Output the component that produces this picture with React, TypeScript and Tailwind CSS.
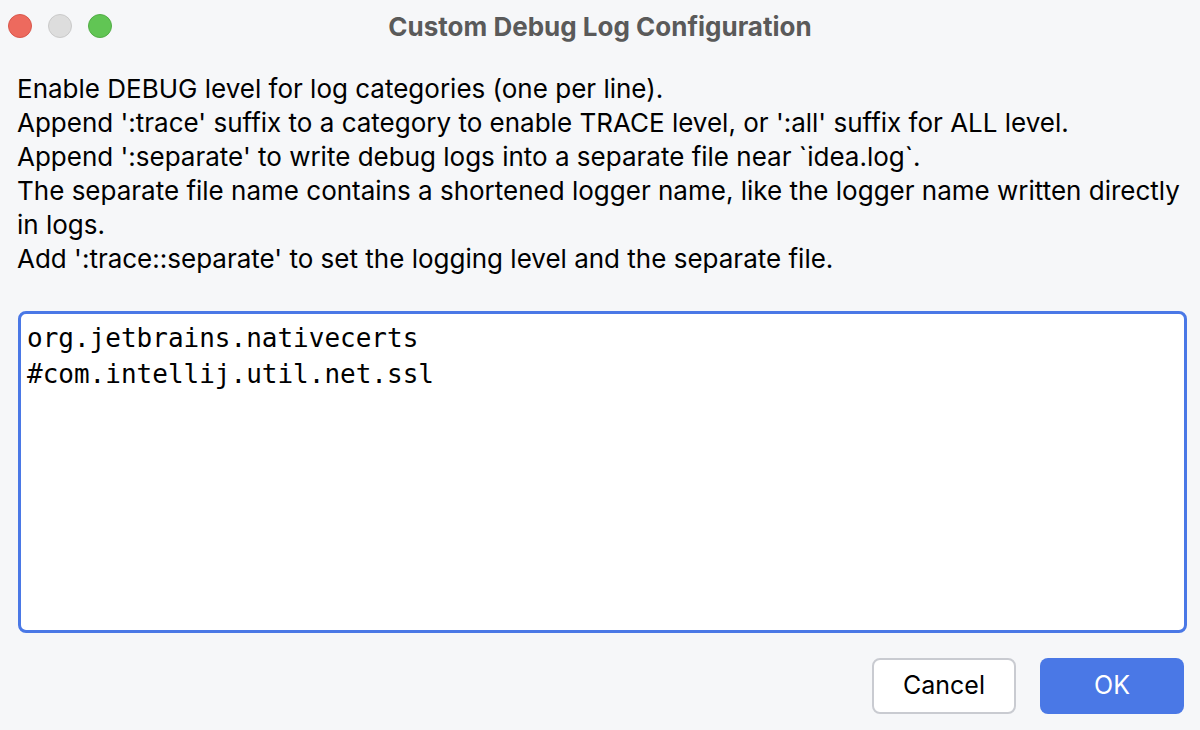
const lines = [
  "Enable DEBUG level for log categories (one per line).",
  "Append ':trace' suffix to a category to enable TRACE level, or ':all' suffix for ALL level.",
  "Append ':separate' to write debug logs into a separate file near `idea.log`.",
  "The separate file name contains a shortened logger name, like the logger name written directly in logs.",
  "Add ':trace::separate' to set the logging level and the separate file.",
];

export default function App() {
  return (
    <div
      className="w-[1200px] h-[730px] bg-[#f6f7f9] flex flex-col overflow-hidden"
      style={{ fontFamily: "Inter, 'Noto Sans', sans-serif" }}
    >
      {/* Title bar */}
      <div className="relative h-[52px] flex items-center justify-center">
        <div className="absolute left-[8px] top-[14px] flex gap-4">
          <span className="w-6 h-6 rounded-full bg-[#ed6a5e] border border-[#d9574c]" />
          <span className="w-6 h-6 rounded-full bg-[#dddddd] border border-[#cacaca]" />
          <span className="w-6 h-6 rounded-full bg-[#61c554] border border-[#52ad46]" />
        </div>
        <span className="text-[26px] font-bold text-[#5a5a5a]">Custom Debug Log Configuration</span>
      </div>

      {/* Description */}
      <div className="pl-[17px] pr-[12px] pt-[20px] text-[26px] leading-[34px] text-black">
        {lines.map((l, i) => (
          <p key={i}>{l}</p>
        ))}
      </div>

      {/* Editor */}
      <div className="pl-[18px] pr-[13px] mt-[35px]">
        <textarea
          defaultValue={"org.jetbrains.nativecerts\n#com.intellij.util.net.ssl"}
          spellCheck={false}
          className="block w-full h-[322px] resize-none bg-white border-[3px] border-[#4a78e6] rounded-[8px] px-[6px] pt-[6px] text-[26px] leading-[36px] text-black outline-none"
          style={{ fontFamily: "'DejaVu Sans Mono', monospace" }}
        />
      </div>

      {/* Buttons */}
      <div className="flex justify-end gap-6 pr-[16px] mt-[25px]">
        <button className="w-[144px] h-[56px] rounded-[8px] bg-white border-2 border-[#c9cbd1] text-[25px] text-black">
          Cancel
        </button>
        <button className="w-[144px] h-[56px] rounded-[8px] bg-[#4a78e6] text-[25px] text-white">
          OK
        </button>
      </div>
    </div>
  );
}
